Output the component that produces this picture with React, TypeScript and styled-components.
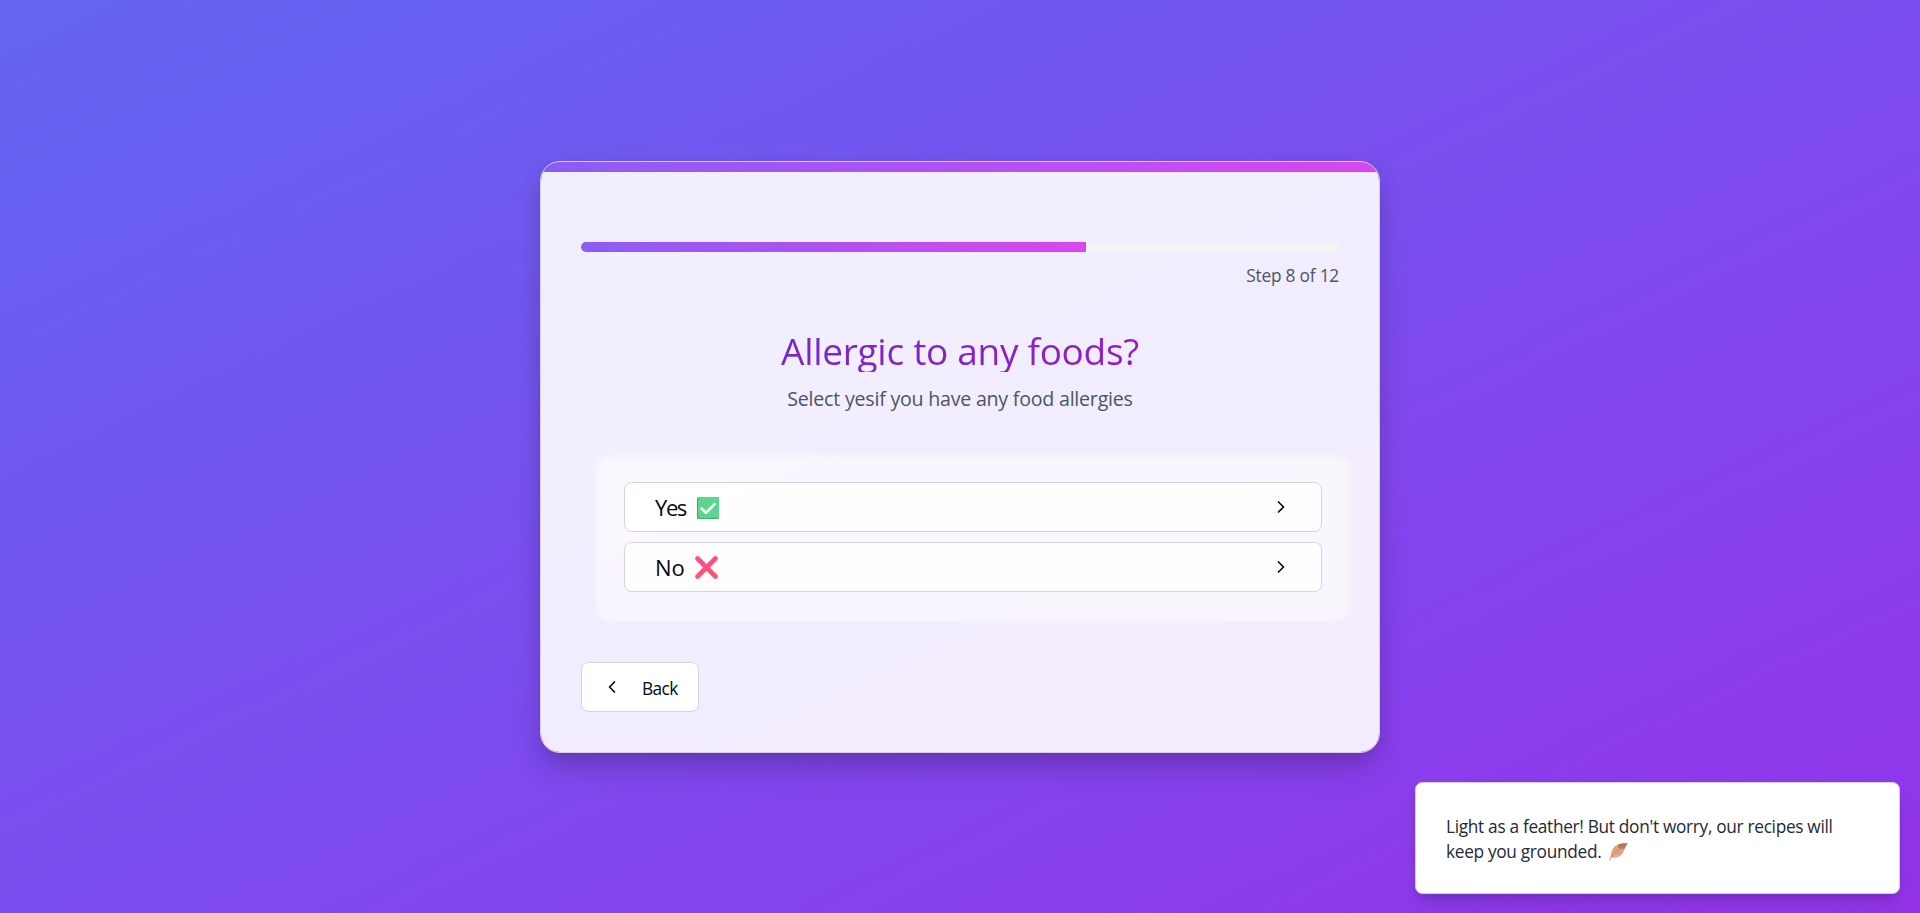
import React from "react";
import styled, { createGlobalStyle } from "styled-components";
import { ChevronLeft, ChevronRight } from "lucide-react";

const GlobalStyle = createGlobalStyle`
  *, *::before, *::after { box-sizing: border-box; }
  body {
    margin: 0;
    font-family: "Open Sans", "Noto Sans", sans-serif;
    color: #030712;
  }
  button { font-family: inherit; color: inherit; }
`;

const Page = styled.main`
  position: relative;
  display: flex;
  align-items: center;
  justify-content: center;
  height: 100vh;
  overflow: hidden;
  background: linear-gradient(to bottom right, #6366f1, #9333ea);
`;

const Card = styled.section`
  display: flex;
  flex-direction: column;
  width: 840px;
  overflow: hidden;
  border: 1px solid #d9cfe0;
  border-radius: 20px;
  background: rgba(255, 255, 255, 0.9);
  background-clip: padding-box;
  box-shadow: 0 20px 32px -5px rgba(0, 0, 0, 0.13), 0 8px 24px -4px rgba(0, 0, 0, 0.16);
`;

const Accent = styled.div`
  height: 10px;
  background: linear-gradient(to right, #8b5cf6, #d946ef);
`;

const Body = styled.div`
  display: flex;
  flex-direction: column;
  gap: 40px;
  padding: 70px 40px 40px;
`;

const Progress = styled.div`
  display: flex;
  flex-direction: column;
  gap: 10px;
`;

const Track = styled.div`
  height: 10px;
  overflow: hidden;
  border-radius: 5px;
  background: #f3f4f6;
`;

const Fill = styled.div`
  height: 100%;
  background: linear-gradient(to right, #8b5cf6, #d946ef);
`;

const StepLabel = styled.div`
  height: 25px;
  font-size: 17.3px;
  line-height: 28px;
  letter-spacing: -0.2px;
  text-align: right;
  color: #4b5563;
`;

const Heading = styled.header`
  display: flex;
  flex-direction: column;
  gap: 10px;
  text-align: center;
`;

const Title = styled.h1`
  height: 45px;
  margin: 0;
  font-size: 37px;
  font-weight: 400;
  line-height: 47px;
  letter-spacing: -0.3px;
  color: transparent;
  background: linear-gradient(to right, #6d28d9, #a21caf);
  background-clip: text;
  -webkit-background-clip: text;
`;

const Subtitle = styled.p`
  height: 30px;
  margin: 0;
  font-size: 19.6px;
  line-height: 33px;
  letter-spacing: -0.22px;
  color: #4b5563;
`;

const Options = styled.div`
  display: flex;
  flex-direction: column;
  gap: 10px;
  height: 170px;
  margin: 0 -13px 0 13px;
  padding: 30px;
  border-radius: 15px;
  background: rgba(255, 255, 255, 0.5);
  box-shadow: inset 0 2px 10px rgba(0, 0, 0, 0.05);
`;

const OptionButton = styled.button`
  display: flex;
  align-items: center;
  justify-content: space-between;
  height: 50px;
  padding: 0 30px;
  border: 1px solid #d9cfe0;
  border-radius: 7.5px;
  background: rgba(255, 255, 255, 0.9);
  font-size: 22px;
`;

const OptionLabel = styled.span<{ $tracking: number; $gap: number }>`
  display: flex;
  align-items: center;
  gap: ${(p) => p.$gap}px;
  line-height: 30px;
  letter-spacing: ${(p) => p.$tracking}px;

  svg {
    margin-top: 2px;
  }
`;

const BackButton = styled.button`
  display: flex;
  align-items: center;
  align-self: flex-start;
  gap: 20px;
  width: 118px;
  height: 50px;
  padding: 0 20px;
  border: 1px solid #d9cfe0;
  border-radius: 7.5px;
  background: #fff;
  font-size: 17.3px;
  letter-spacing: -0.6px;
`;

const BackLabel = styled.span`
  padding-top: 4px;
`;

const Toast = styled.aside`
  position: absolute;
  right: 20px;
  bottom: 19px;
  width: 485px;
  height: 112px;
  padding: 31px 30px 29px;
  border: 1px solid #d9cfe0;
  border-radius: 7.5px;
  background: #fff;
  box-shadow: 0 12px 18px -3px rgba(0, 0, 0, 0.12), 0 5px 8px -4px rgba(0, 0, 0, 0.12);
  font-size: 17.3px;
  line-height: 25px;
  letter-spacing: -0.32px;
  white-space: nowrap;
  color: #1f2937;
`;

const FeatherSvg = styled.svg`
  margin-left: 3px;
  vertical-align: -3px;
`;

const CheckEmoji = () => (
  <svg width="22" height="22" viewBox="0 0 22 22" aria-label="Check">
    <rect width="22" height="22" rx="1.6" fill="#43a77a" />
    <rect x="1" width="21" height="21" rx="1.4" fill="#5bd68c" />
    <path d="M4.7 11.7 9 15.8 17.6 7.2" fill="none" stroke="#fff" strokeWidth="2.6" strokeLinecap="round" strokeLinejoin="round" />
  </svg>
);

const CrossEmoji = () => (
  <svg width="23" height="23" viewBox="0 0 23 23" aria-label="Cross">
    <defs>
      <linearGradient id="cross" gradientUnits="userSpaceOnUse" x1="0" y1="0" x2="0" y2="23">
        <stop offset="0" stopColor="#f64f8c" />
        <stop offset="1" stopColor="#ff566e" />
      </linearGradient>
    </defs>
    <path d="M2.5 2.5 20.5 20.5M20.5 2.5 2.5 20.5" fill="none" stroke="url(#cross)" strokeWidth="4.6" strokeLinecap="round" />
  </svg>
);

const FeatherEmoji = () => (
  <FeatherSvg width="19" height="18" viewBox="0 0 19 18" aria-label="Feather">
    <path d="M.6 17.5Q1.5 13.8 3.2 11.5" fill="none" stroke="#e8b0a0" strokeWidth="1.1" strokeLinecap="round" />
    <path d="M2.2 14.5C1.4 10 3.2 5 7.5 2.3 10.6.4 14.3.2 18.6.3 17.5 3.1 16 4.2 15.4 6.5 14.5 9.7 12.4 12.8 8.7 14 6.4 14.8 4.2 14.5 2.2 14.5Z" fill="#dfa07d" />
    <path d="M9 1.6C12 .3 15 .2 18.6.3 17.5 2.7 16.3 3.9 15.6 5.5L12.4 5.8 9.5 4.8Z" fill="#b97862" />
    <path d="M2.2 14.5C4 10.8 8 7.2 13.5 4.2" fill="none" stroke="#c98267" strokeWidth=".8" />
    <path d="M3.5 14.5Q9.5 14.9 12.4 11.4L6 11.5Z" fill="#eba99b" />
  </FeatherSvg>
);

const options = [
  { label: "Yes", emoji: <CheckEmoji />, tracking: -1.4, gap: 10.8 },
  { label: "No", emoji: <CrossEmoji />, tracking: 0, gap: 10 },
];

const step = 8;
const totalSteps = 12;

export default function App() {
  return (
    <>
      <GlobalStyle />
      <Page>
        <Card>
          <Accent />
          <Body>
            <Progress>
              <Track>
                <Fill style={{ width: `${(step / totalSteps) * 100}%` }} />
              </Track>
              <StepLabel>{`Step ${step} of ${totalSteps}`}</StepLabel>
            </Progress>
            <Heading>
              <Title>Allergic to any foods?</Title>
              <Subtitle>Select yesif you have any food allergies</Subtitle>
            </Heading>
            <Options>
              {options.map((o) => (
                <OptionButton key={o.label}>
                  <OptionLabel $tracking={o.tracking} $gap={o.gap}>
                    {o.label}
                    {o.emoji}
                  </OptionLabel>
                  <ChevronRight size={20} />
                </OptionButton>
              ))}
            </Options>
            <BackButton>
              <ChevronLeft size={20} />
              <BackLabel>Back</BackLabel>
            </BackButton>
          </Body>
        </Card>
        <Toast>
          Light as a feather! But don't worry, our recipes will
          <br />
          keep you grounded. <FeatherEmoji />
        </Toast>
      </Page>
    </>
  );
}
